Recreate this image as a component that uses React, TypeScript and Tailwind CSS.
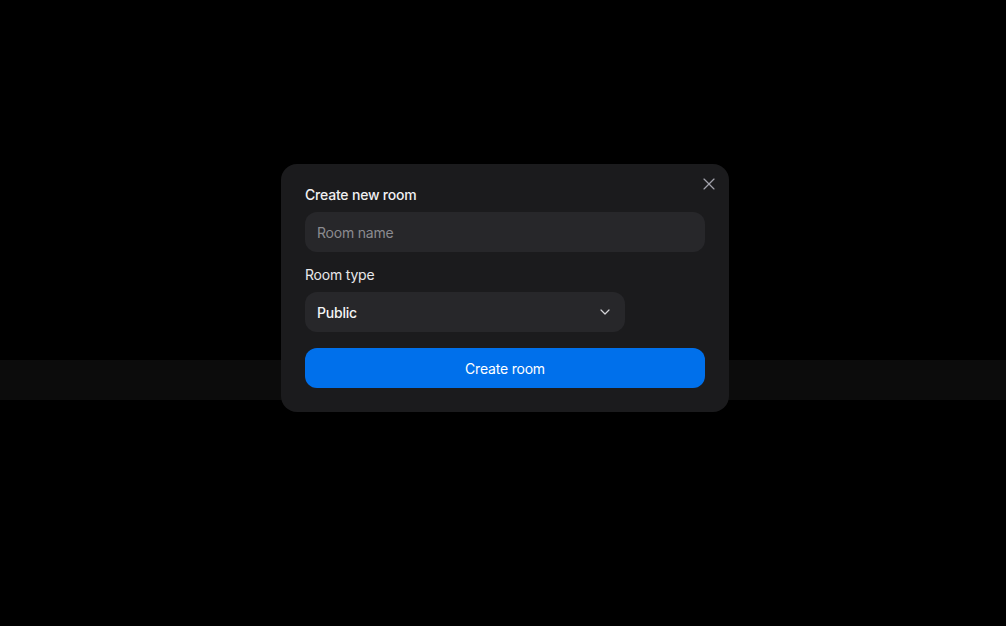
import { X, ChevronDown } from 'lucide-react';

export default function App() {
  return (
    <div className="relative w-full h-[626px] bg-black overflow-hidden" style={{ fontFamily: 'Inter, "Noto Sans", sans-serif' }}>
      {/* background band */}
      <div className="h-[360px]" />
      <div className="h-10 bg-[#0c0c0c]" />

      {/* modal */}
      <div className="absolute left-[281px] top-[164px] w-[448px] rounded-[16px] bg-[#1b1b1d] px-6 pt-[21px] pb-6 tracking-[-0.2px]">
        <button className="absolute right-[10px] top-[10px] text-[#a1a1aa]">
          <X className="w-5 h-5" strokeWidth={1.4} />
        </button>
        <div className="text-[14px] leading-5 font-medium text-[#f0f0f2]">Create new room</div>
        <input
          placeholder="Room name"
          className="mt-[7px] w-full h-10 rounded-xl bg-[#27272a] px-3 text-[14px] tracking-[-0.2px] text-white placeholder:text-[#8b8b90] outline-none"
        />
        <div className="mt-[13px] text-[14px] leading-5 text-[#e8e8ea]">Room type</div>
        <div className="mt-[7px] w-[320px] h-10 rounded-xl bg-[#27272a] px-3 flex items-center justify-between">
          <span className="text-[14px] font-medium text-[#f4f4f5]">Public</span>
          <ChevronDown className="w-4 h-4 text-[#d4d4d8]" strokeWidth={1.8} />
        </div>
        <button className="mt-4 w-full h-10 rounded-xl bg-[#0070eb] text-[14px] text-white">Create room</button>
      </div>
    </div>
  );
}
